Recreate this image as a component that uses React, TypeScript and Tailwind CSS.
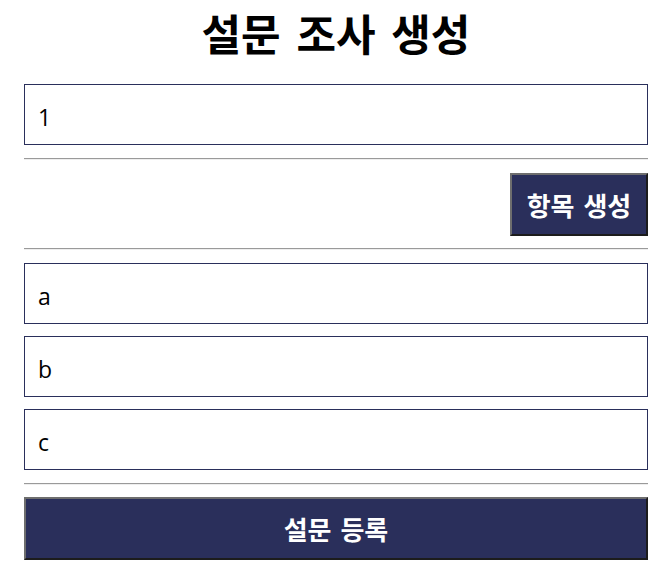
const font = { fontFamily: '"Noto Sans CJK KR", "Noto Sans", sans-serif' };

function Divider() {
  return <div className="h-0 border-t border-b border-t-[#9a9a9a] border-b-[#eeeeee]" />;
}

function Field({ value }: { value: string }) {
  return (
    <div
      className="h-[61px] border border-[#2a2f5b] flex items-center px-[13px] pt-[5px] text-[23px] text-black"
      style={{ fontFamily: '"Open Sans", "Noto Sans CJK KR", sans-serif' }}
    >
      {value}
    </div>
  );
}

function NavyButton({ label, className }: { label: string; className?: string }) {
  return (
    <button
      className={
        "h-[63px] bg-[#2a2f5b] text-white font-bold text-[26px] leading-none [word-spacing:3px] border-2 border-t-[#6e6e6e] border-l-[#6e6e6e] border-b-[#1c1c1c] border-r-[#1c1c1c] " +
        (className ?? "")
      }
    >
      {label}
    </button>
  );
}

export default function App() {
  return (
    <div className="bg-white w-[663px] h-[570px]" style={font}>
      <div className="ml-[24px] w-[624px] flex flex-col">
        <h1 className="text-center text-[43px] font-bold leading-[60px] mt-[2px] text-black [word-spacing:6px]">설문 조사 생성</h1>
        <div className="mt-[22px]">
          <Field value="1" />
        </div>
        <div className="mt-[13px]">
          <Divider />
        </div>
        <div className="mt-[13px] flex justify-end">
          <NavyButton label="항목 생성" className="w-[138px]" />
        </div>
        <div className="mt-[12px]">
          <Divider />
        </div>
        <div className="mt-[13px] flex flex-col gap-[12px]">
          <Field value="a" />
          <Field value="b" />
          <Field value="c" />
        </div>
        <div className="mt-[13px]">
          <Divider />
        </div>
        <div className="mt-[12px]">
          <NavyButton label="설문 등록" className="w-full" />
        </div>
      </div>
    </div>
  );
}
